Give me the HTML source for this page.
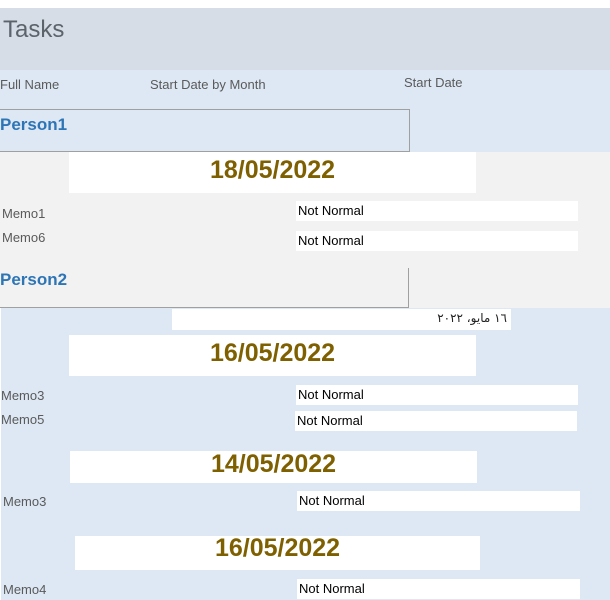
<!DOCTYPE html>
<html><head><meta charset="utf-8"><style>
*{margin:0;padding:0;box-sizing:border-box}
body{width:610px;height:600px;overflow:hidden;background:#fff;position:relative;font-family:"Liberation Sans",sans-serif}
div{position:absolute}
.t{font-size:13px;color:#5a5a5a;white-space:nowrap}
.w{background:#fff}
.nn{background:#fff;font-size:13px;color:#000;padding-left:2px;line-height:20px;height:20px;white-space:nowrap}
.d{background:#fff;text-align:center;font-weight:bold;font-size:25px;color:#7f6000}
.p{font-weight:bold;font-size:17px;color:#2e75b6}
</style></head><body>
<div style="left:0;top:8px;width:610px;height:62px;background:#d6dde6"></div>
<div class="t" style="left:3px;top:16px;font-size:24px;color:#5d636b">Tasks</div>
<div style="left:0;top:70px;width:610px;height:82px;background:#dde8f4"></div>
<div class="t" style="left:0;top:77px">Full Name</div>
<div class="t" style="left:150px;top:77px">Start Date by Month</div>
<div class="t" style="left:404px;top:75px">Start Date</div>
<div style="left:-1px;top:109px;width:411px;height:43px;border:1px solid #a0a0a0"></div>
<div class="p" style="left:0;top:115px">Person1</div>
<div style="left:0;top:152px;width:610px;height:156px;background:#f2f2f2"></div>
<div class="d" style="left:69px;top:152px;width:407px;height:41px;line-height:36px">18/05/2022</div>
<div class="t" style="left:2px;top:206px">Memo1</div>
<div class="t" style="left:2px;top:230px">Memo6</div>
<div class="nn" style="left:296px;top:201px;width:282px">Not Normal</div>
<div class="nn" style="left:296px;top:231px;width:282px">Not Normal</div>
<div style="left:-1px;top:268px;width:410px;height:40px;border-right:1px solid #a0a0a0;border-bottom:1px solid #a0a0a0"></div>
<div class="p" style="left:0;top:270px">Person2</div>
<div style="left:1px;top:308px;width:609px;height:292px;background:#dde8f4"></div>
<div class="w" style="left:172px;top:309px;width:339px;height:21px;font-family:'DejaVu Sans',sans-serif;font-size:12px;text-align:right;padding-right:4px;line-height:18px;color:#222" dir="rtl">١٦ مايو، ٢٠٢٢</div>
<div class="d" style="left:69px;top:335px;width:407px;height:41px;line-height:36px">16/05/2022</div>
<div class="t" style="left:1px;top:388px">Memo3</div>
<div class="t" style="left:1px;top:412px">Memo5</div>
<div class="nn" style="left:296px;top:385px;width:282px">Not Normal</div>
<div class="nn" style="left:295px;top:411px;width:282px">Not Normal</div>
<div class="d" style="left:70px;top:451px;width:407px;height:32px;line-height:26px">14/05/2022</div>
<div class="t" style="left:3px;top:494px">Memo3</div>
<div class="nn" style="left:297px;top:491px;width:283px">Not Normal</div>
<div class="d" style="left:75px;top:536px;width:405px;height:34px;line-height:24px">16/05/2022</div>
<div class="t" style="left:3px;top:582px">Memo4</div>
<div class="nn" style="left:297px;top:579px;width:283px">Not Normal</div>
</body></html>
